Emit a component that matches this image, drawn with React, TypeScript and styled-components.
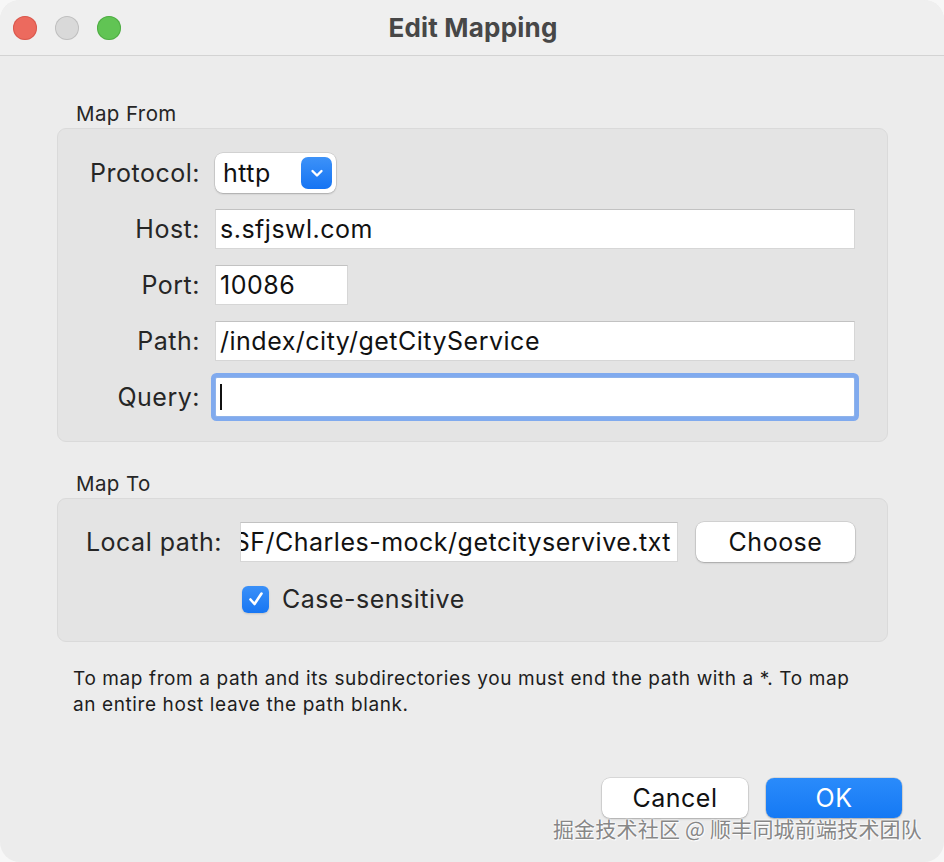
import React from 'react';
import styled, { createGlobalStyle } from 'styled-components';

const GlobalStyle = createGlobalStyle`
  html, body {
    margin: 0;
    padding: 0;
    background: #f7f7f7;
  }
  body {
    font-family: Inter, "Noto Sans", "Liberation Sans", sans-serif;
    color: #1f1f1f;
  }
`;

// Window chrome
const Window = styled.div`
  position: relative;
  width: 944px;
  height: 862px;
  border-radius: 20px;
  background: #ececec;
  overflow: hidden;
  display: flex;
  flex-direction: column;
  box-sizing: border-box;
`;

const TitleBar = styled.div`
  position: relative;
  height: 56px;
  flex: none;
  display: flex;
  align-items: center;
  justify-content: center;
  background: #efefef;
  border-bottom: 1px solid #d3d3d3;
  box-sizing: border-box;
`;

const Lights = styled.div`
  position: absolute;
  left: 13px;
  top: 16px;
  display: flex;
  gap: 18px;
`;

const Light = styled.span<{ $color: string; $border: string }>`
  width: 24px;
  height: 24px;
  border-radius: 50%;
  background: ${p => p.$color};
  box-shadow: inset 0 0 0 1px ${p => p.$border};
`;

const Title = styled.div`
  font-size: 26px;
  font-weight: 700;
  color: #474747;
  letter-spacing: 0.2px;
  margin-left: 2px;
`;

const Body = styled.div`
  flex: 1;
  display: flex;
  flex-direction: column;
  padding: 0 56px 0 57px;
`;

const SectionLabel = styled.div<{ $top: number }>`
  margin-top: ${p => p.$top}px;
  padding-left: 19px;
  height: 26px;
  line-height: 26px;
  font-size: 20.5px;
  letter-spacing: 0.4px;
  color: #262626;
  margin-bottom: 1px;
`;

const Group = styled.div<{ $pt: number; $pb: number }>`
  background: #e4e4e4;
  border: 1px solid #dadada;
  border-radius: 9px;
  padding: ${p => p.$pt}px 32px ${p => p.$pb}px 0;
  box-sizing: border-box;
`;

const FromGrid = styled.div`
  display: grid;
  grid-template-columns: 142px 1fr;
  column-gap: 15px;
  row-gap: 16px;
  align-items: center;
`;

const ToGrid = styled.div`
  display: grid;
  grid-template-columns: 164px 438px 159px;
  column-gap: 18px;
  row-gap: 22px;
  align-items: center;
`;

const Label = styled.div`
  text-align: right;
  font-size: 25px;
  letter-spacing: 0.5px;
  color: #262626;
  white-space: nowrap;
`;

const Field = styled.div<{ $width?: string; $focused?: boolean }>`
  position: relative;
  width: ${p => p.$width || '100%'};
  height: 40px;
  box-sizing: border-box;
  background: #fff;
  border: 1px solid #d6d6d6;
  border-top-color: #c2c2c2;
  display: flex;
  align-items: center;
  padding: 0 4px;
  font-size: 25px;
  letter-spacing: 0.5px;
  color: #111;
  white-space: nowrap;
  overflow: hidden;
  ${p => p.$focused && `
    overflow: visible;
    border-color: #8fb3ea;
    box-shadow: 0 0 0 4px #80aaee;
    border-radius: 2px;
  `}
`;

const ClippedField = styled(Field)`
  justify-content: flex-end;
  padding: 0 6px 0 0;
`;

const Caret = styled.span`
  width: 2px;
  height: 26px;
  background: #111;
`;

const Popup = styled.div`
  width: 121px;
  height: 40px;
  box-sizing: border-box;
  background: #fff;
  border-radius: 8px;
  box-shadow: 0 0 0 0.5px rgba(0, 0, 0, 0.15), 0 1px 2px rgba(0, 0, 0, 0.2);
  display: flex;
  align-items: center;
  justify-content: space-between;
  padding: 0 4px 0 8px;
  font-size: 25px;
  letter-spacing: 0.5px;
  color: #111;
`;

const Chevron = styled.span`
  width: 31px;
  height: 32px;
  border-radius: 7px;
  background: linear-gradient(#3d92f8, #1574f3);
  display: flex;
  align-items: center;
  justify-content: center;
`;

const PushButton = styled.button<{ $primary?: boolean; $width: number }>`
  width: ${p => p.$width}px;
  height: 40px;
  border: none;
  border-radius: 8px;
  font-family: inherit;
  font-size: 25px;
  letter-spacing: 0.5px;
  color: ${p => (p.$primary ? '#fff' : '#111')};
  background: ${p => (p.$primary ? 'linear-gradient(#2a8bfb, #1579f4)' : '#fff')};
  box-shadow: 0 0 0 0.5px rgba(0, 0, 0, 0.15), 0 1px 2px rgba(0, 0, 0, 0.22);
  padding: 0;
`;

const CheckRow = styled.div`
  grid-column: 2 / 4;
  display: flex;
  align-items: center;
  gap: 13px;
  padding-left: 2px;
  font-size: 25px;
  letter-spacing: 0.5px;
  color: #262626;
`;

const CheckBox = styled.span`
  width: 27px;
  height: 27px;
  border-radius: 6px;
  background: linear-gradient(#3a90f8, #1776f3);
  display: flex;
  align-items: center;
  justify-content: center;
  box-shadow: 0 1px 2px rgba(0, 0, 0, 0.15);
`;

const Help = styled.p`
  margin: 24px 0 0 16px;
  font-size: 19px;
  line-height: 26px;
  color: #1d1d1d;
  letter-spacing: 0.6px;
  white-space: nowrap;
`;

const Footer = styled.div`
  margin-top: auto;
  margin-bottom: 44px;
  margin-right: -14px;
  display: flex;
  justify-content: flex-end;
  gap: 18px;
`;

const Watermark = styled.div`
  position: absolute;
  right: 22px;
  bottom: 19px;
  font-family: "Noto Sans CJK SC", sans-serif;
  font-size: 21px;
  letter-spacing: 0.2px;
  color: #878787;
  text-shadow: 0 0 2px #fff, 0 0 2px #fff, 1px 1px 1px rgba(255, 255, 255, 0.9);
  white-space: nowrap;
`;

export default function App() {
  return (
    <>
      <GlobalStyle />
      <Window>
        <TitleBar>
          <Lights>
            <Light $color="#ec6a5e" $border="rgba(200,70,60,0.5)" />
            <Light $color="#d9d9d9" $border="rgba(0,0,0,0.12)" />
            <Light $color="#61c454" $border="rgba(60,150,50,0.5)" />
          </Lights>
          <Title>Edit Mapping</Title>
        </TitleBar>
        <Body>
          <SectionLabel $top={45}>Map From</SectionLabel>
          <Group $pt={24} $pb={24}>
            <FromGrid>
              <Label>Protocol:</Label>
              <Popup>
                <span>http</span>
                <Chevron>
                  <svg width="14" height="10" viewBox="0 0 14 10">
                    <path d="M2.5 3 L7 7.5 L11.5 3" fill="none" stroke="#fff" strokeWidth="2.4" strokeLinecap="round" strokeLinejoin="round" />
                  </svg>
                </Chevron>
              </Popup>
              <Label>Host:</Label>
              <Field>s.sfjswl.com</Field>
              <Label>Port:</Label>
              <Field $width="133px">10086</Field>
              <Label>Path:</Label>
              <Field>/index/city/getCityService</Field>
              <Label>Query:</Label>
              <Field $focused>
                <Caret />
              </Field>
            </FromGrid>
          </Group>

          <SectionLabel $top={29}>Map To</SectionLabel>
          <Group $pt={23} $pb={27}>
            <ToGrid>
              <Label>Local path:</Label>
              <ClippedField>/SF/Charles-mock/getcityservive.txt</ClippedField>
              <PushButton $width={159}>Choose</PushButton>
              <div />
              <CheckRow>
                <CheckBox>
                  <svg width="18" height="18" viewBox="0 0 18 18">
                    <path d="M3.5 9.5 L7.5 14 L14.5 3.5" fill="none" stroke="#fff" strokeWidth="2.6" strokeLinecap="round" strokeLinejoin="round" />
                  </svg>
                </CheckBox>
                <span>Case-sensitive</span>
              </CheckRow>
            </ToGrid>
          </Group>

          <Help>
            To map from a path and its subdirectories you must end the path with a *. To map
            <br />
            an entire host leave the path blank.
          </Help>

          <Footer>
            <PushButton $width={146}>Cancel</PushButton>
            <PushButton $width={136} $primary>OK</PushButton>
          </Footer>
        </Body>
        <Watermark>掘金技术社区 @ 顺丰同城前端技术团队</Watermark>
      </Window>
    </>
  );
}
